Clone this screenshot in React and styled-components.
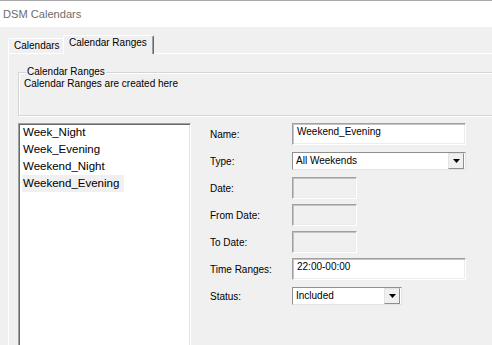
import React from "react";
import styled, { createGlobalStyle } from "styled-components";

const GlobalStyle = createGlobalStyle`
  html, body {
    margin: 0;
    padding: 0;
    background: #f0f0f0;
  }
  body {
    font-family: "Liberation Sans", Arial, sans-serif;
    overflow: hidden;
  }
`;

const Window = styled.div`
  width: 492px;
  height: 345px;
  overflow: hidden;
  background: #f0f0f0;
  display: flex;
  flex-direction: column;
`;

const TitleBar = styled.div`
  flex-shrink: 0;
  height: 26px;
  border-top: 1px solid #a9a9a9;
  background: #ffffff;
  padding-left: 3px;
  font-size: 11.1px;
  line-height: 27px;
  color: #6d6d6d;
`;

const Body = styled.div`
  padding-top: 8px;
`;

const TabStrip = styled.div`
  display: flex;
  align-items: flex-end;
  height: 19px;
  padding-left: 8px;
  margin-bottom: -1px;
  position: relative;
  z-index: 1;
`;

const Tab = styled.div`
  box-sizing: border-box;
  flex-shrink: 0;
  width: ${({ $active }) => ($active ? 91 : 57)}px;
  height: ${({ $active }) => ($active ? 19 : 15)}px;
  margin-left: ${({ $active }) => ($active ? -2 : 0)}px;
  margin-bottom: ${({ $active }) => ($active ? 0 : 1)}px;
  padding: 1px 0 0 5px;
  background: #f0f0f0;
  border-top: 1px solid #ffffff;
  border-left: 1px solid #ffffff;
  border-right: 1px solid ${({ $active }) => ($active ? "#696969" : "#a0a0a0")};
  box-shadow: ${({ $active }) => ($active ? "inset -1px 0 0 #a0a0a0" : "none")};
  border-radius: 2px 2px 0 0;
  font-size: 10px;
  line-height: 12px;
  color: #000;
  position: relative;
  z-index: ${({ $active }) => ($active ? 2 : 1)};
  white-space: nowrap;
`;

const TabPanel = styled.div`
  box-sizing: border-box;
  width: 560px;
  height: 300px;
  margin-left: 8px;
  border-top: 1px solid #ffffff;
  border-left: 1px solid #ffffff;
  padding: 0 9px;
`;

const GroupBox = styled.div`
  box-sizing: border-box;
  position: relative;
  height: 44px;
  margin-top: 18px;
  border: 1px solid #d5d5d5;
  box-shadow: inset 1px 1px 0 #ffffff, 1px 1px 0 #ffffff;
  padding: 5px 0 0 5px;
`;

const Legend = styled.span`
  position: absolute;
  top: -7px;
  left: 7px;
  padding: 0 1px;
  background: #f0f0f0;
  font-size: 10px;
  line-height: 12px;
  color: #000;
`;

const Description = styled.div`
  font-size: 10px;
  line-height: 12px;
  color: #000;
`;

const Content = styled.div`
  display: flex;
  align-items: flex-start;
  margin-top: 7px;
`;

const ListBox = styled.div`
  box-sizing: border-box;
  flex-shrink: 0;
  width: 173px;
  height: 240px;
  background: #ffffff;
  border: 1px solid;
  border-color: #a0a0a0 #ffffff #ffffff #a0a0a0;
  box-shadow: inset 1px 1px 0 #696969, inset -1px -1px 0 #e3e3e3;
  padding: 0 0 0 3px;
  display: flex;
  flex-direction: column;
  align-items: flex-start;
`;

const ListItem = styled.div`
  height: 17px;
  padding: 0 5px 0 1px;
  font-size: 11.5px;
  line-height: 17px;
  color: #000;
  background: ${({ $selected }) => ($selected ? "#f0f0f0" : "transparent")};
  white-space: nowrap;
`;

const Form = styled.div`
  margin-left: 19px;
  margin-top: -2px;
  display: flex;
  flex-direction: column;
`;

const FieldRow = styled.div`
  display: grid;
  grid-template-columns: 82px auto;
  align-items: start;
  height: 27px;
`;

const Label = styled.div`
  padding-top: 8px;
  font-size: 10px;
  line-height: 12px;
  color: #000;
  white-space: nowrap;
`;

const TextField = styled.div`
  box-sizing: border-box;
  width: ${({ $w }) => $w}px;
  height: 22px;
  margin-top: 2px;
  padding: 2px 4px 0;
  border: 1px solid;
  border-color: #a0a0a0 #ffffff #ffffff #a0a0a0;
  box-shadow: inset 1px 1px 0 #c4c4c4, inset -1px -1px 0 #ececec;
  background: ${({ $disabled }) => ($disabled ? "#f0f0f0" : "#ffffff")};
  font-size: 10px;
  line-height: 12px;
  color: #000;
  white-space: nowrap;
`;

const Combo = styled.div`
  box-sizing: border-box;
  width: ${({ $w }) => $w}px;
  height: 18px;
  margin-top: 4px;
  padding-left: 3px;
  border: 1px solid;
  border-color: #8f8f8f #e3e3e3 #e3e3e3 #8f8f8f;
  background: #ffffff;
  display: flex;
  align-items: center;
  justify-content: space-between;
  font-size: 10px;
  line-height: 16px;
  color: #000;
`;

const DropButton = styled.div`
  box-sizing: border-box;
  width: 16px;
  height: 16px;
  margin-right: 1px;
  background: #f0f0f0;
  border: 1px solid;
  border-color: #e3e3e3 #8f8f8f #8f8f8f #e3e3e3;
  display: flex;
  align-items: center;
  justify-content: center;
`;

const Arrow = () => (
  <svg width="7" height="4" viewBox="0 0 7 4">
    <polygon points="0,0 7,0 3.5,4" fill="#000" />
  </svg>
);

const items = ["Week_Night", "Week_Evening", "Weekend_Night", "Weekend_Evening"];

export default function App() {
  return (
    <>
      <GlobalStyle />
      <Window>
        <TitleBar>DSM Calendars</TitleBar>
        <Body>
          <TabStrip>
            <Tab>Calendars</Tab>
            <Tab $active>Calendar Ranges</Tab>
          </TabStrip>
          <TabPanel>
            <GroupBox>
              <Legend>Calendar Ranges</Legend>
              <Description>Calendar Ranges are created here</Description>
            </GroupBox>
            <Content>
              <ListBox>
                {items.map((it) => (
                  <ListItem key={it} $selected={it === "Weekend_Evening"}>
                    {it}
                  </ListItem>
                ))}
              </ListBox>
              <Form>
                <FieldRow>
                  <Label>Name:</Label>
                  <TextField $w={174}>Weekend_Evening</TextField>
                </FieldRow>
                <FieldRow>
                  <Label>Type:</Label>
                  <Combo $w={174}>
                    All Weekends
                    <DropButton>
                      <Arrow />
                    </DropButton>
                  </Combo>
                </FieldRow>
                <FieldRow>
                  <Label>Date:</Label>
                  <TextField $w={65} $disabled />
                </FieldRow>
                <FieldRow>
                  <Label>From Date:</Label>
                  <TextField $w={65} $disabled />
                </FieldRow>
                <FieldRow>
                  <Label>To Date:</Label>
                  <TextField $w={65} $disabled />
                </FieldRow>
                <FieldRow>
                  <Label>Time Ranges:</Label>
                  <TextField $w={174}>22:00-00:00</TextField>
                </FieldRow>
                <FieldRow>
                  <Label>Status:</Label>
                  <Combo $w={110}>
                    Included
                    <DropButton>
                      <Arrow />
                    </DropButton>
                  </Combo>
                </FieldRow>
              </Form>
            </Content>
          </TabPanel>
        </Body>
      </Window>
    </>
  );
}
